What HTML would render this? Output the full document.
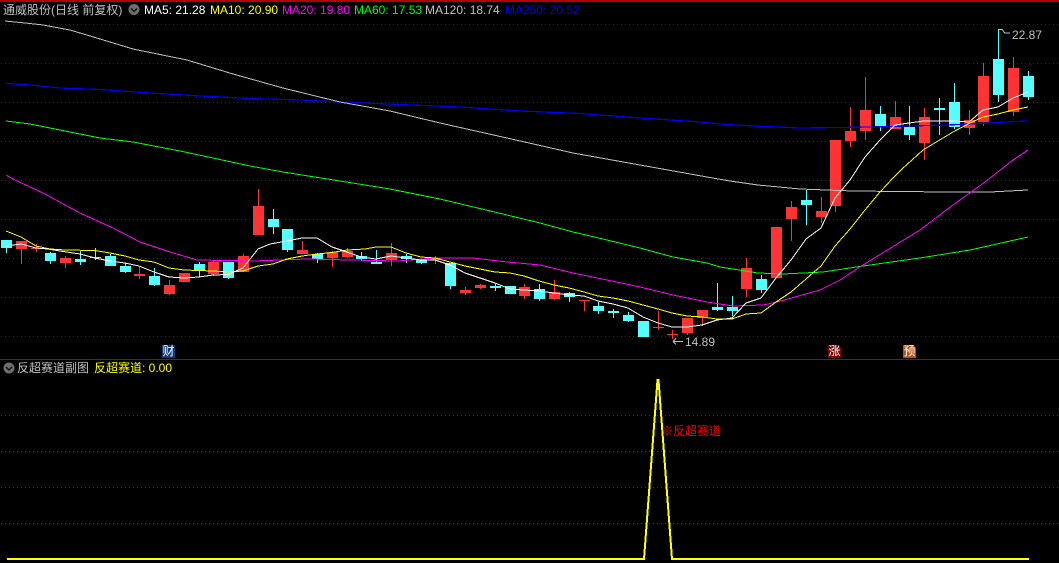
<!DOCTYPE html>
<html><head><meta charset="utf-8">
<style>
html,body{margin:0;padding:0;background:#000;}
#c{position:relative;width:1059px;height:563px;overflow:hidden;background:#000;font-family:"Liberation Sans","WenQuanYi Zen Hei","Noto Sans CJK SC",sans-serif;}
#c svg{position:absolute;left:0;top:0;}
.t{position:absolute;white-space:nowrap;font-size:12px;line-height:14px;}
.b{position:absolute;width:13px;height:13px;top:345px;color:#fff;font-size:12px;line-height:13px;text-align:center;}
.f{clip-path:polygon(0 0,80% 0,100% 20%,100% 100%,0 100%);}
</style></head><body>
<div id="c">
<svg width="1059" height="563" viewBox="0 0 1059 563" shape-rendering="crispEdges">
<rect x="0" y="0" width="1059" height="2" fill="#b00000"/>
<rect x="0" y="359" width="1059" height="1" fill="#b00000"/>
<g stroke="#9a0000" stroke-width="1" stroke-dasharray="1 3" fill="none">
<path d="M1 24.5H1059M1 63.5H1059M1 102.5H1059M1 141.5H1059M1 180.5H1059M1 219.5H1059M1 258.5H1059M1 297.5H1059M1 336.5H1059"/>
<path stroke="#8a1a20" d="M1 415.5H1059M1 451.5H1059M1 487.5H1059M1 523.5H1059"/>
</g>
<path fill="#ff3333" d="M16 241h11v8h-11zM21 249h1v15h-1zM31 248h11v1h-11zM36 244h1v8h-1zM60 258h11v5h-11zM65 256h1v12h-1zM134 274h11v2h-11zM139 267h1v12h-1zM164 285h11v9h-11zM169 280h1v15h-1zM179 273h11v9h-11zM208 262h11v12h-11zM213 260h1v16h-1zM238 256h11v16h-11zM243 254h1v18h-1zM253 206h11v29h-11zM258 189h1v46h-1zM297 250h11v4h-11zM302 241h1v13h-1zM327 252h11v6h-11zM332 251h1v16h-1zM342 251h11v6h-11zM347 248h1v10h-1zM386 253h11v7h-11zM391 243h1v23h-1zM430 258h11v2h-11zM435 256h1v8h-1zM460 290h11v3h-11zM465 287h1v8h-1zM475 285h11v3h-11zM480 284h1v5h-1zM519 287h11v9h-11zM524 284h1v15h-1zM549 292h11v7h-11zM554 280h1v20h-1zM579 300h11v1h-11zM584 300h1v11h-1zM653 327h11v1h-11zM658 311h1v19h-1zM667 334h11v1h-11zM672 330h1v9h-1zM682 318h11v15h-11zM687 333h1v2h-1zM697 310h11v8h-11zM702 318h1v8h-1zM741 268h11v21h-11zM746 258h1v39h-1zM771 227h11v51h-11zM786 207h11v12h-11zM791 201h1v40h-1zM816 211h11v6h-11zM821 197h1v26h-1zM830 140h11v66h-11zM835 206h1v6h-1zM845 131h11v10h-11zM850 107h1v40h-1zM860 110h11v21h-11zM865 77h1v63h-1zM890 117h11v12h-11zM895 101h1v28h-1zM919 117h11v26h-11zM924 108h1v52h-1zM964 120h11v8h-11zM969 110h1v25h-1zM978 76h11v46h-11zM983 63h1v63h-1zM1008 68h11v44h-11zM1013 57h1v59h-1z"/>
<path fill="#54ffff" d="M1 240h11v8h-11zM6 248h1v5h-1zM45 253h11v8h-11zM50 252h1v12h-1zM75 259h11v3h-11zM80 251h1v14h-1zM90 257h11v1h-11zM95 248h1v12h-1zM105 256h11v10h-11zM110 254h1v12h-1zM120 266h11v6h-11zM125 263h1v10h-1zM149 276h11v9h-11zM154 268h1v18h-1zM194 264h11v6h-11zM199 262h1v15h-1zM223 262h11v16h-11zM228 278h1v1h-1zM268 219h11v8h-11zM273 209h1v25h-1zM282 229h11v21h-11zM287 250h1v2h-1zM312 254h11v5h-11zM317 253h1v10h-1zM356 256h11v3h-11zM361 252h1v9h-1zM371 262h11v2h-11zM376 250h1v14h-1zM401 256h11v3h-11zM406 254h1v9h-1zM416 260h11v3h-11zM421 259h1v5h-1zM445 263h11v23h-11zM450 286h1v3h-1zM490 286h11v2h-11zM495 284h1v7h-1zM505 286h11v8h-11zM534 289h11v10h-11zM539 284h1v17h-1zM564 293h11v4h-11zM569 292h1v10h-1zM593 306h11v5h-11zM598 302h1v12h-1zM608 311h11v2h-11zM613 309h1v9h-1zM623 315h11v6h-11zM628 312h1v10h-1zM638 321h11v16h-11zM712 307h11v3h-11zM717 283h1v28h-1zM727 307h11v4h-11zM732 296h1v20h-1zM756 279h11v11h-11zM761 275h1v18h-1zM801 200h11v5h-11zM806 190h1v35h-1zM875 114h11v12h-11zM880 106h1v25h-1zM904 127h11v8h-11zM909 106h1v34h-1zM934 108h11v2h-11zM939 98h1v37h-1zM949 102h11v25h-11zM954 83h1v46h-1zM993 59h11v36h-11zM998 29h1v73h-1zM1023 76h11v21h-11zM1028 71h1v29h-1z"/>
<g fill="none" stroke-width="1">
<polyline stroke="#0000ff" stroke-width="1.2" points="6,83.5 30,85 60,88 100,89.5 150,93 200,96 250,98.5 300,100 340,102 400,104.5 460,107 520,111 580,113.5 640,118 700,122 720,124 753,126 800,128 873,127 947,125 990,123 1006,122 1028,121"/>
<polyline stroke="#c0c0c0" points="5,21 25,23 43,25 70,30 100,39 133,49 187,60 233,74 283,88 340,102 390,111 440,123 507,138 573,153 640,165 707,177 730,181 758,185 800,189 853,191 947,192 990,192 1028,190"/>
<polyline stroke="#00ff00" points="6,121 30,124 60,130 100,138 133,142 180,151 213,158 250,166 283,172 340,181 390,189 440,199 507,215 540,223 573,232 607,240 640,248 673,257 707,263 720,267 758,273 783,274 823,272 863,266 920,258 970,250 1028,237"/>
<polyline stroke="#ff00ff" points="6,175 15,180 43,193 80,213 113,228 140,242 170,252 197,260 253,261 307,259 350,260 398,261 435,258 473,258 507,262 540,265 573,273 607,280 640,287 673,295 707,302 733,306 763,305 777,302 820,290 840,280 863,265 920,230 953,205 985,182 1013,160 1028,150"/>
<polyline stroke="#ffff00" points="6,231 21,237 36,246 50,249 65,250 95,250.5 110,253 125,256 139,260 154,262 169,268 184,270 199,270.5 213,271 228,272 243,271 258,266 273,264 287,259 302,256 317,254 332,252.5 347,250 365,249 376,247 391,247 406,253 421,257 435,258 450,262 465,266 480,269 495,272 510,273 524,276 539,281 554,285 569,288 584,292 598,296 613,298 628,301 643,305 658,309 672,313 687,316 702,317 717,319 732,319 746,314 761,313 776,302 791,292 806,279 821,266 835,246 850,229 865,210 880,192 893,178 902,169 912,160 923,150 953,132 970,123 983,117 998,114 1013,110 1028,107"/>
<polyline stroke="#ffffff" points="6,246 21,244 36,248 48,249 60,251 80,254 95,258 110,261 125,263 139,266 154,272 169,277 184,278 199,277 213,275 228,274.5 243,268 258,249 270,244 287,241 302,238 317,238 332,247 347,252 361,257 376,259 391,256 406,258 421,260 435,260 450,265 465,273 480,278 495,283 510,289 524,290 539,291 554,293 569,295 584,296 598,301 613,304 628,308 643,317 658,323 672,327 687,327 702,325 717,320 732,318 746,303 761,298 776,278 791,260 806,239 821,228 835,198 850,180 865,157 880,140 895,125 909,123 924,121 939,121 954,121 969,122 983,110 998,107 1013,98 1028,92"/>
</g>
<path fill="none" stroke="#c0c0c0" d="M673 341.5H683M673 341.5L676 338.5M673 341.5L676 344.5"/>
<path fill="none" stroke="#c0c0c0" d="M999 29.5H1002L1005 33H1010"/>
<path fill="none" stroke="#ffff00" stroke-width="2" d="M7 559H644L657.5 380H658.5L672 559H1029" stroke-linejoin="miter"/>
<circle cx="134" cy="9.5" r="5.5" fill="#6e6e6e" shape-rendering="auto"/>
<path fill="none" stroke="#111" stroke-width="1.5" shape-rendering="auto" d="M131 8.5L134 11.5L137 8.5"/>
<circle cx="9" cy="368" r="5.5" fill="#6e6e6e" shape-rendering="auto"/>
<path fill="none" stroke="#111" stroke-width="1.5" shape-rendering="auto" d="M6 367L9 370L12 367"/>
</svg>
<div class="t" style="left:3px;top:3px;color:#c0c0c0;">通威股份(日线 前复权)</div>
<div class="t" style="left:144px;top:3px;color:#fff;">MA5: 21.28</div>
<div class="t" style="left:210px;top:3px;color:#ff0;">MA10: 20.90</div>
<div class="t" style="left:282px;top:3px;color:#f0f;">MA20: 19.80</div>
<div class="t" style="left:354px;top:3px;color:#0f0;">MA60: 17.53</div>
<div class="t" style="left:425px;top:3px;color:#c0c0c0;">MA120: 18.74</div>
<div class="t" style="left:505px;top:3px;color:#00f;">MA250: 20.52</div>
<div class="t" style="left:17px;top:361px;color:#c0c0c0;">反超赛道副图</div>
<div class="t" style="left:94px;top:361px;color:#ff0;">反超赛道: 0.00</div>
<div class="t" style="left:661px;top:424px;color:#f00;">※反超赛道</div>
<div class="t" style="left:685px;top:335px;color:#c0c0c0;">14.89</div>
<div class="t" style="left:1012px;top:28px;color:#c0c0c0;">22.87</div>
<div class="b" style="left:162px;background:#0f3c78;">财</div>
<div class="b f" style="left:828px;background:#800000;">涨</div>
<div class="b f" style="left:903px;background:#b5500f;">预</div>
</div>
</body></html>
